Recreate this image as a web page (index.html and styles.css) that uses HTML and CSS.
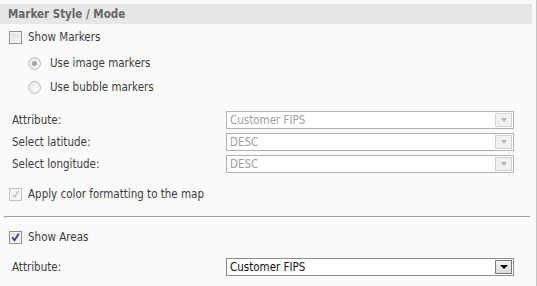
FILE: index.html
```html
<!DOCTYPE html>
<html lang="en">

<head>
    <meta charset="UTF-8">
    <title>Marker Style / Mode</title>
    <link rel="stylesheet" href="styles.css">
</head>

<body>
    <div class="panel">
        <div class="header">Marker Style / Mode</div>

        <div class="check-row markers">
            <span class="checkbox"></span>
            <span class="text">Show Markers</span>
        </div>

        <div class="radio-row first">
            <span class="radio checked"></span>
            <span class="text">Use image markers</span>
        </div>
        <div class="radio-row">
            <span class="radio"></span>
            <span class="text">Use bubble markers</span>
        </div>

        <div class="fields">
            <div class="field">
                <span class="label">Attribute:</span>
                <div class="select disabled">
                    <span class="value">Customer FIPS</span>
                    <span class="arrow"></span>
                </div>
            </div>
            <div class="field">
                <span class="label">Select latitude:</span>
                <div class="select disabled">
                    <span class="value">DESC</span>
                    <span class="arrow"></span>
                </div>
            </div>
            <div class="field">
                <span class="label">Select longitude:</span>
                <div class="select disabled">
                    <span class="value">DESC</span>
                    <span class="arrow"></span>
                </div>
            </div>
        </div>

        <div class="check-row apply">
            <span class="checkbox checked disabled">
                <svg width="9" height="9" viewBox="0 0 9 9"><path d="M1.5 4.5 L3.5 7 L7.5 1" fill="none" stroke="#b8b8b8" stroke-width="1.2"/></svg>
            </span>
            <span class="text">Apply color formatting to the map</span>
        </div>

        <div class="divider"></div>

        <div class="check-row areas">
            <span class="checkbox checked">
                <svg width="9" height="9" viewBox="0 0 9 9"><path d="M1.2 4.2 L3.5 7.2 L7.8 0.8" fill="none" stroke="#2b3f8f" stroke-width="1.8"/></svg>
            </span>
            <span class="text">Show Areas</span>
        </div>

        <div class="field area-field">
            <span class="label">Attribute:</span>
            <div class="select">
                <span class="value">Customer FIPS</span>
                <span class="arrow"></span>
            </div>
        </div>
    </div>
</body>

</html>
```

FILE: styles.css
```css
* {
    margin: 0;
    padding: 0;
    box-sizing: border-box;
}

body {
    background: #fafafa;
    font-family: "DejaVu Sans Condensed", "DejaVu Sans", sans-serif;
    font-stretch: condensed;
    font-size: 11.5px;
    color: #3c3c3c;
}

.panel {
    width: 537px;
    height: 286px;
    border-right: 1px solid #c4c4c4;
    padding-top: 4px;
}

.header {
    width: 532px;
    height: 20px;
    background: #e7e7e7;
    padding-left: 8px;
    font-weight: bold;
    font-size: 11.5px;
    line-height: 20px;
    color: #666;
}

.check-row,
.radio-row {
    display: flex;
    align-items: center;
    height: 24px;
    gap: 6px;
}

.check-row {
    padding-left: 9px;
}

.markers {
    margin-top: 1px;
}

.radio-row {
    padding-left: 28px;
    gap: 9px;
}

.radio-row.first {
    margin-top: 2px;
}

.checkbox {
    width: 13px;
    height: 13px;
    border: 1px solid #8e8f8f;
    background: linear-gradient(135deg, #dcdcdc 0%, #f6f6f6 100%);
    display: flex;
    align-items: center;
    justify-content: center;
    box-shadow: inset 0 0 0 1px #f4f4f4;
}

.checkbox.disabled {
    border-color: #c2c2c2;
    background: #f4f4f4;
}

.checkbox.checked:not(.disabled) {
    background: linear-gradient(135deg, #e0e0e0 0%, #fbfbfb 100%);
}

.radio {
    width: 13px;
    height: 13px;
    border-radius: 50%;
    border: 1px solid #bdbdbd;
    background: radial-gradient(circle at 60% 60%, #fafafa 0%, #e2e2e2 100%);
    display: flex;
    align-items: center;
    justify-content: center;
}

.radio.checked::after {
    content: '';
    width: 5px;
    height: 5px;
    border-radius: 50%;
    background: #a4a4a4;
}

.fields {
    margin-top: 12px;
    display: flex;
    flex-direction: column;
    gap: 4px;
}

.field {
    display: flex;
    align-items: center;
    padding-left: 12px;
    height: 18px;
}

.label {
    width: 214px;
}

.select {
    width: 288px;
    height: 18px;
    border: 1px solid #8d8d8d;
    background: #fff;
    display: flex;
    align-items: stretch;
    color: #111;
}

.select .value {
    flex: 1;
    padding-left: 3px;
    line-height: 16px;
}

.select .arrow {
    width: 17px;
    margin: 1px;
    border: 1px solid #7b7b7b;
    background: linear-gradient(#f2f2f2, #dadada);
    display: flex;
    align-items: center;
    justify-content: center;
}

.select .arrow::after {
    content: '';
    border-left: 4px solid transparent;
    border-right: 4px solid transparent;
    border-top: 4px solid #000;
}

.select.disabled {
    border-color: #b1b1b1;
    color: #a0a0a0;
}

.select.disabled .arrow {
    border-color: #d2d2d2;
    background: #f1f1f1;
}

.select.disabled .arrow::after {
    border-top-color: #b4b4b4;
    border-left-width: 3.5px;
    border-right-width: 3.5px;
}

.apply {
    margin-top: 9px;
}

.divider {
    margin: 10px 0 0 4px;
    width: 526px;
    height: 2px;
    border-top: 1px solid #a0a0a0;
    border-left: 1px solid #a0a0a0;
}

.areas {
    margin-top: 7px;
}

.area-field {
    margin-top: 9px;
}
```
